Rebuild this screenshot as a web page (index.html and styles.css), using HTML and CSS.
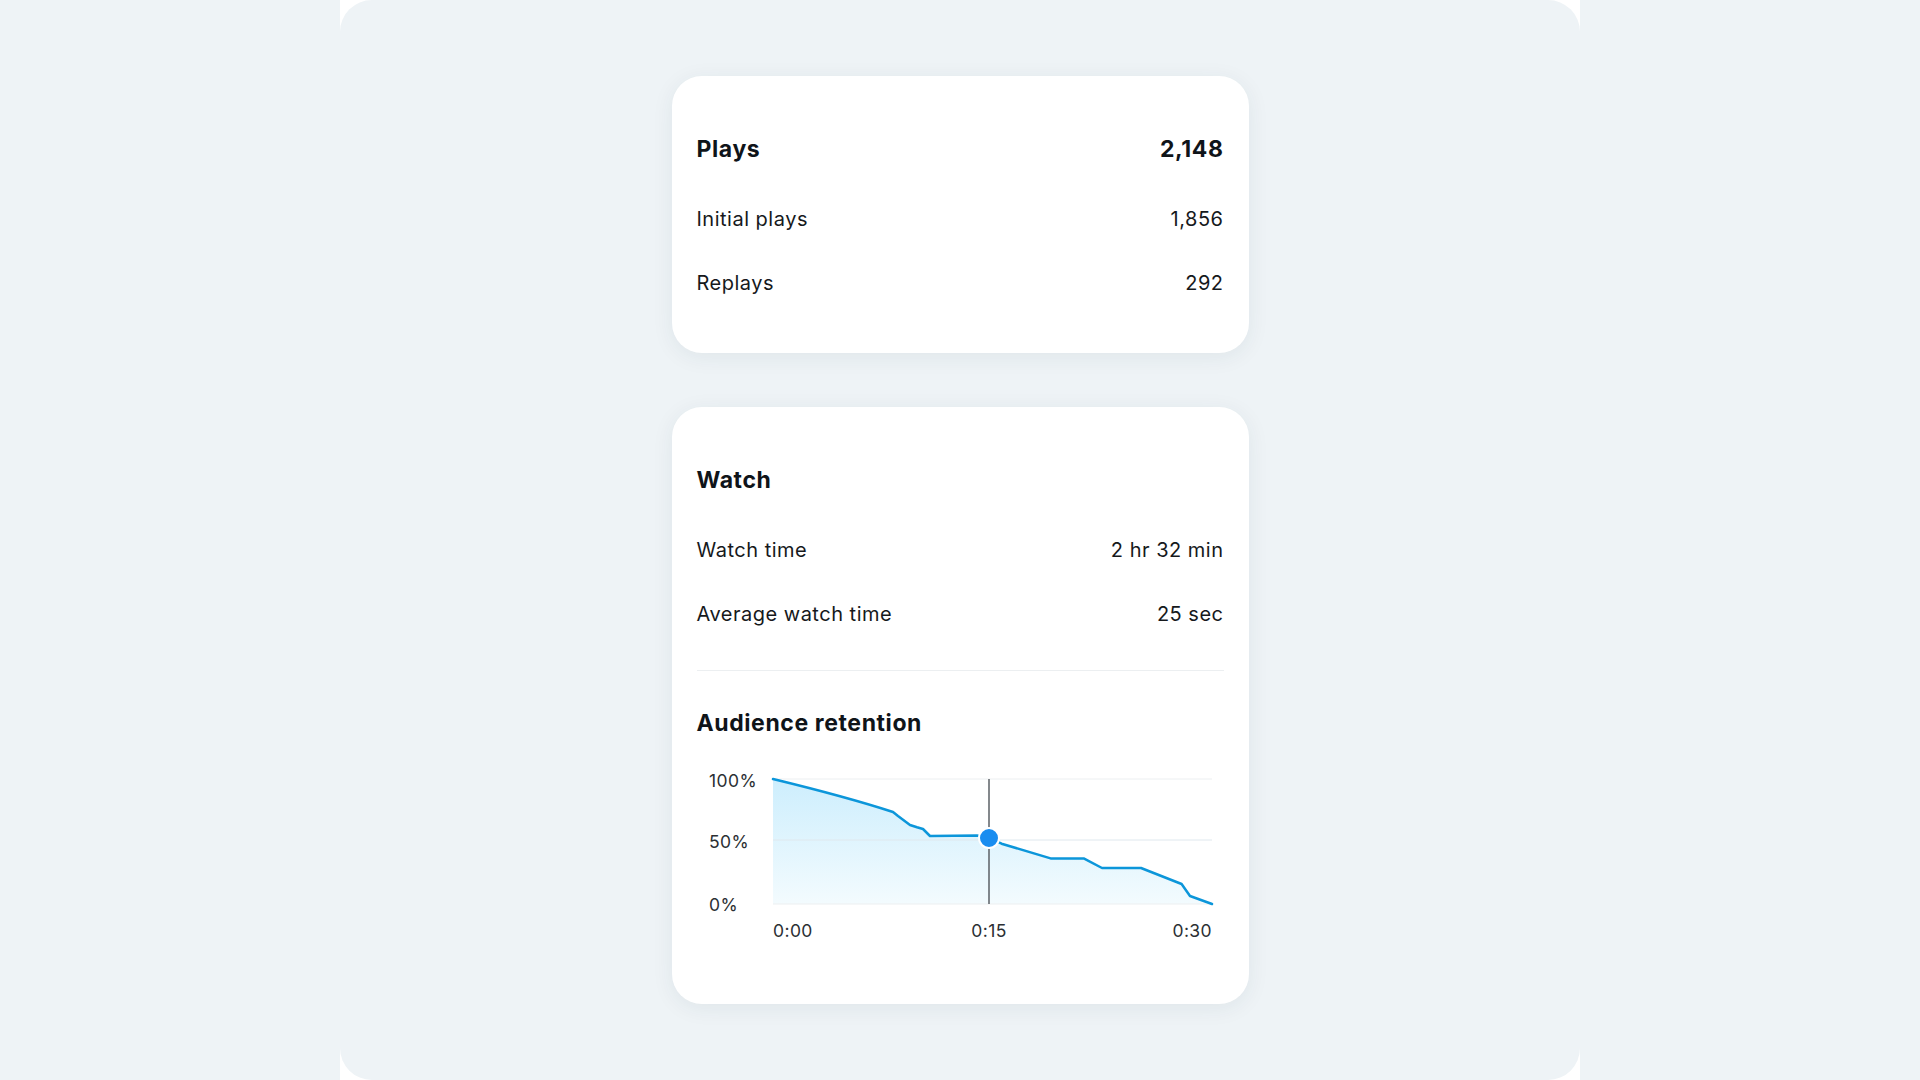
FILE: index.html
```html
<!DOCTYPE html>
<html lang="en">
<head>
<meta charset="utf-8">
<title>Video analytics</title>
<link rel="stylesheet" href="styles.css">
</head>
<body>
<div class="frame">
  <div class="panel">
    <section class="card">
      <div class="title-row"><span>Plays</span><span>2,148</span></div>
      <div class="row"><span>Initial plays</span><span>1,856</span></div>
      <div class="row"><span>Replays</span><span>292</span></div>
    </section>
    <section class="card card-watch">
      <div class="title-row"><span>Watch</span></div>
      <div class="row"><span>Watch time</span><span>2 hr 32 min</span></div>
      <div class="row"><span>Average watch time</span><span>25 sec</span></div>
      <div class="divider"></div>
      <div class="title-row sub"><span>Audience retention</span></div>
      <svg class="chart" width="526" height="200" viewBox="0 0 526 200">
        <defs>
          <linearGradient id="fill" x1="0" y1="0" x2="0" y2="1">
            <stop offset="0" stop-color="#cdeefd"/>
            <stop offset="1" stop-color="#f3fbfe"/>
          </linearGradient>
        </defs>
        <path class="area" d="M76 24 Q150 42 196 57 L201 61 L213 70 L220 72.3 L226 74 L233 81 L280 80.5 L292 83 L304.6 88.7 L353.6 103.4 L386.7 103.4 L405 113 L444 113 L484.6 129 L493 141 L515 149 L76 149 Z"/>
        <line class="grid" x1="76" y1="24" x2="515" y2="24"/>
        <line class="grid mid" x1="76" y1="85" x2="515" y2="85"/>
        <line class="grid" x1="76" y1="149" x2="515" y2="149"/>
        <line class="cursor" x1="292" y1="24" x2="292" y2="149"/>
        <path class="curve" d="M76 24 Q150 42 196 57 L201 61 L213 70 L220 72.3 L226 74 L233 81 L280 80.5 L292 83 L304.6 88.7 L353.6 103.4 L386.7 103.4 L405 113 L444 113 L484.6 129 L493 141 L515 149"/>
        <circle class="dot" cx="292" cy="83" r="10"/>
        <text class="lbl" x="12" y="31.5">100%</text>
        <text class="lbl" x="12" y="92.5">50%</text>
        <text class="lbl" x="12" y="155.5">0%</text>
        <text class="lbl" x="76" y="181.5">0:00</text>
        <text class="lbl mid-x" x="292" y="181.5">0:15</text>
        <text class="lbl end-x" x="515" y="181.5">0:30</text>
      </svg>
    </section>
  </div>
</div>
</body>
</html>
```

FILE: styles.css
```css
* { box-sizing: border-box; }
html, body {
  margin: 0;
  padding: 0;
  background: #eef3f6;
  font-family: Inter, "Noto Sans", "Liberation Sans", sans-serif;
}
.frame {
  width: 1240px;
  height: 1080px;
  margin: 0 auto;
  background: #ffffff;
}
.panel {
  height: 100%;
  background: #eef3f6;
  border-radius: 32px;
  display: flex;
  flex-direction: column;
  align-items: center;
  padding-top: 76px;
  gap: 54px;
}
.card {
  width: 577px;
  background: #ffffff;
  border-radius: 30px;
  padding: 41px 25px 38px 25px;
  box-shadow: 0 4px 22px rgba(30, 50, 70, 0.07);
}
.card-watch {
  padding-bottom: 49px;
}
.title-row {
  display: flex;
  justify-content: space-between;
  line-height: 64px;
  height: 64px;
  font-size: 23px;
  letter-spacing: 0.6px;
  font-weight: 700;
  color: #0f1419;
  margin-bottom: 6px;
}
.title-row.sub {
  margin-top: 20px;
  margin-bottom: 0;
}
.row {
  display: flex;
  justify-content: space-between;
  line-height: 64px;
  height: 64px;
  font-size: 20px;
  letter-spacing: 0.5px;
  font-weight: 400;
  color: #16191c;
}
.divider {
  height: 1px;
  background: #eceff1;
  margin-top: 24px;
}
.chart {
  display: block;
}
.area { fill: url(#fill); }
.grid { stroke: #eceff1; stroke-width: 1; }
.grid.mid { stroke: #dfe8ee; }
.cursor { stroke: #5b6066; stroke-width: 1.5; }
.curve {
  fill: none;
  stroke: #0c96da;
  stroke-width: 2.5;
  stroke-linejoin: round;
  stroke-linecap: round;
}
.dot { fill: #1a8df0; stroke: #ffffff; stroke-width: 2; }
.lbl {
  font-family: Inter, "Noto Sans", "Liberation Sans", sans-serif;
  font-size: 17.5px;
  letter-spacing: 0.4px;
  fill: #2b2f33;
}
.mid-x { text-anchor: middle; }
.end-x { text-anchor: end; }
```
